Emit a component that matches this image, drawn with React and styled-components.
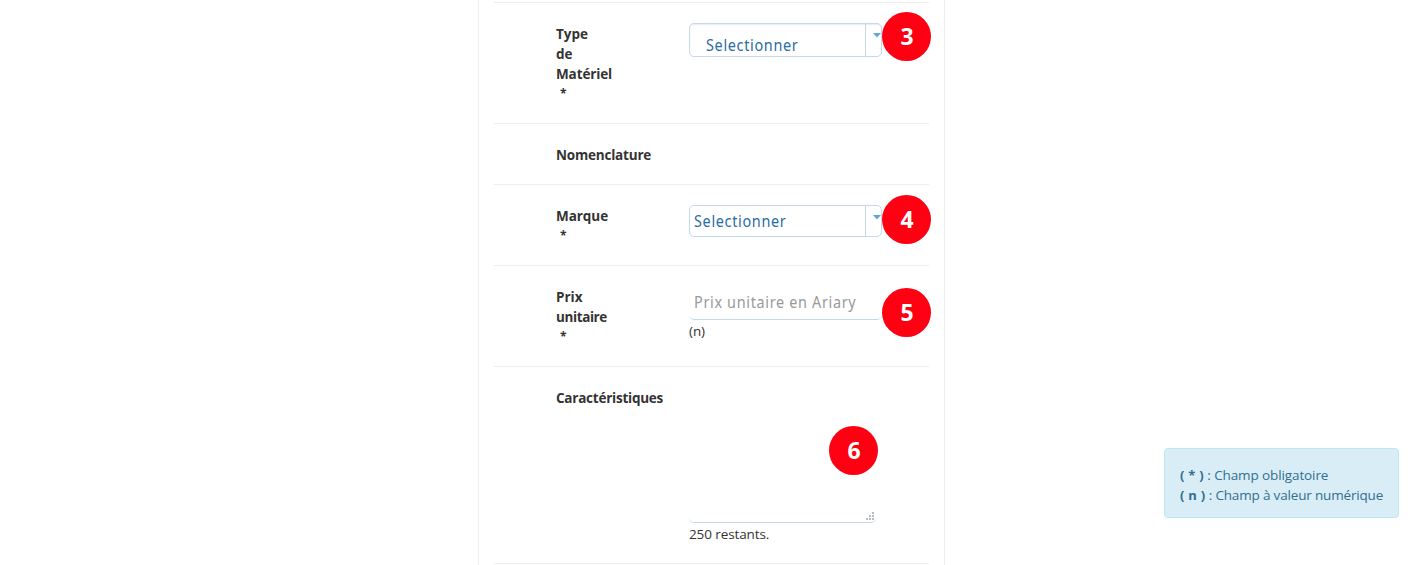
import React from "react";
import styled, { createGlobalStyle } from "styled-components";

const GlobalStyle = createGlobalStyle`
  *, *::before, *::after { box-sizing: border-box; }
  body {
    margin: 0;
    background: #fff;
    color: #333;
    font: 14px/20px "Open Sans", "Noto Sans", sans-serif;
    overflow: hidden;
  }
`;

const Page = styled.main`
  position: relative;
  height: 565px;
  overflow: hidden;
`;

const Panel = styled.section`
  width: 467px;
  height: 565px;
  margin-left: 478px;
  padding: 2px 15px 0;
  border: solid #eee;
  border-width: 0 1px;
`;

const Row = styled.div`
  position: relative;
  display: grid;
  grid-template-columns: 133px 1fr;
  align-items: start;
  height: ${(p) => p.$height}px;
  padding: 20px 0 0 62px;
  border-top: 1px solid #eee;
`;

const Label = styled.div`
  padding-top: 1px;
  font-weight: 700;
  white-space: nowrap;
`;

const Word = styled.span`
  display: block;
  width: max-content;
  font-size: 13.5px;
  letter-spacing: ${(p) => p.$spacing || 0}px;
`;

const Star = styled.span`
  display: block;
  padding-left: 4px;
  font-size: 12px;
`;

const Field = styled.div`
  width: 193px;
`;

const Select = styled.div`
  display: flex;
  height: ${(p) => p.$height}px;
  border: 1px solid #c4d8e8;
  border-radius: 5px;
  box-shadow: ${(p) => (p.$inset ? "inset 0 1px 1px rgba(0, 0, 0, 0.08)" : "none")};
`;

const Value = styled.div`
  flex: 1;
  padding: ${(p) => p.$pad};
  color: #2a6ca3;
`;

const ControlText = styled.span`
  display: inline-block;
  font: 16px/20px "Noto Sans", sans-serif;
  letter-spacing: 0.75px;
  white-space: nowrap;
  transform: scaleX(0.9);
  transform-origin: left;
`;

const Arrow = styled.span`
  width: 16px;
  padding: 9px 0 0 7px;
  border-left: 1px solid #c4d8e8;
  line-height: 0;
`;

const Input = styled.div`
  height: 34px;
  padding: 6px 5px 0;
  border-bottom: 1px solid #c4d8e8;
  border-radius: 5px;
  color: #999;
`;

const TextArea = styled.div`
  display: flex;
  align-items: flex-end;
  justify-content: flex-end;
  width: 187px;
  height: 136px;
  padding: 0 2px 2px 0;
  border-bottom: 1px solid #c4d8e8;
  border-radius: 5px;
`;

const Hint = styled.div`
  padding-top: 1px;
  font-size: 13.5px;
  letter-spacing: -0.1px;
`;

const Badge = styled.span`
  position: absolute;
  top: ${(p) => p.$top}px;
  left: ${(p) => p.$left || 388}px;
  width: 49px;
  height: 49px;
  padding-left: 1px;
  border-radius: 50%;
  background: #ff0012;
  color: #fff;
  font: 700 23px/49px "Noto Sans", sans-serif;
  text-align: center;
`;

const Notice = styled.aside`
  position: absolute;
  top: 448px;
  right: 22px;
  width: 235px;
  height: 70px;
  padding: 16px 15px;
  border: 1px solid #bce8f1;
  border-radius: 4px;
  background: #d9edf7;
  color: #31708f;
  font-size: 13.5px;
  white-space: nowrap;
`;

const Legend = styled.div`
  width: max-content;
  letter-spacing: ${(p) => p.$spacing || 0}px;

  b {
    font-size: 13px;
    letter-spacing: 0.25px;
  }
`;

const Caret = () => (
  <Arrow>
    <svg width="8" height="5" viewBox="0 0 8 5">
      <path d="M0 0h8L4 4.6z" fill="#65a6d1" />
    </svg>
  </Arrow>
);

const Grip = () => (
  <svg width="8" height="8" viewBox="0 0 8 8" shapeRendering="crispEdges">
    <path d="M6 0h2v2H6zM3 3h2v2H3zM6 3h2v2H6zM0 6h2v2H0zM3 6h2v2H3zM6 6h2v2H6z" fill="#bbb" />
  </svg>
);

export default function App() {
  return (
    <>
      <GlobalStyle />
      <Page>
        <Panel>
          <Row $height={121}>
            <Label>
              <Word>Type</Word>
              <Word>de</Word>
              <Word $spacing={-0.12}>Matériel</Word>
              <Star>*</Star>
            </Label>
            <Field>
              <Select $height={34} $inset>
                <Value $pad="11px 0 0 16px">
                  <ControlText>Selectionner</ControlText>
                </Value>
                <Caret />
              </Select>
            </Field>
            <Badge $top={9}>3</Badge>
          </Row>
          <Row $height={61}>
            <Label>
              <Word $spacing={-0.2}>Nomenclature</Word>
            </Label>
          </Row>
          <Row $height={81}>
            <Label>
              <Word $spacing={-0.05}>Marque</Word>
              <Star>*</Star>
            </Label>
            <Field>
              <Select $height={32}>
                <Value $pad="5px 0 0 4px">
                  <ControlText>Selectionner</ControlText>
                </Value>
                <Caret />
              </Select>
            </Field>
            <Badge $top={10}>4</Badge>
          </Row>
          <Row $height={101}>
            <Label>
              <Word>Prix</Word>
              <Word $spacing={-0.4}>unitaire</Word>
              <Star>*</Star>
            </Label>
            <Field>
              <Input>
                <ControlText>Prix unitaire en Ariary</ControlText>
              </Input>
              <Hint>(n)</Hint>
            </Field>
            <Badge $top={22}>5</Badge>
          </Row>
          <Row $height={197}>
            <Label>
              <Word $spacing={-0.24}>Caractéristiques</Word>
            </Label>
            <Field>
              <TextArea>
                <Grip />
              </TextArea>
              <Hint>250 restants.</Hint>
            </Field>
            <Badge $top={59} $left={335}>6</Badge>
          </Row>
          <Row $height={2} />
        </Panel>
        <Notice>
          <Legend $spacing={-0.11}>
            <b>( * )</b> : Champ obligatoire
          </Legend>
          <Legend $spacing={-0.17}>
            <b>( n )</b> : Champ à valeur numérique
          </Legend>
        </Notice>
      </Page>
    </>
  );
}
